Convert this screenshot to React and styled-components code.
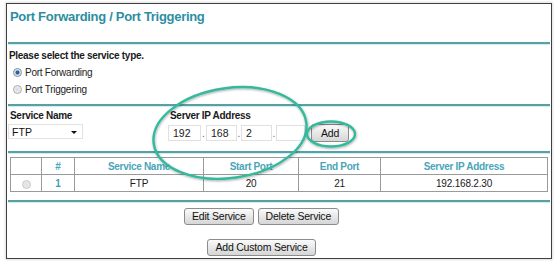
import React from 'react';
import styled, { createGlobalStyle } from 'styled-components';

const Global = createGlobalStyle`
  html, body { margin: 0; padding: 0; background: #fff; }
  body { font-family: "Liberation Sans", Arial, sans-serif; font-size: 10px; color: #1a1a1a; }
  * { box-sizing: border-box; }
`;

const Page = styled.div`
  position: relative;
  width: 557px;
  height: 266px;
  padding: 3px 6px 0 6px;
`;

const Frame = styled.div`
  width: 546px;
  height: 256px;
  border: 1px solid #3f3f3f;
  box-shadow: 0 0 2px 1px rgba(0, 0, 0, 0.13);
  display: flex;
  flex-direction: column;
  background: #fff;
`;

const TitleBar = styled.div`
  height: 38px;
  padding: 5px 0 0 3px;
  flex-shrink: 0;
`;

const Title = styled.h1`
  margin: 0;
  font-size: 13px;
  line-height: 16px;
  font-weight: bold;
  color: #2d8ea3;
  letter-spacing: -0.3px;
`;

const Divider = styled.div`
  height: 2px;
  margin: 0 1px;
  flex-shrink: 0;
  background: #5a9ea6;
  box-shadow: 0 1px 1px #c9eef0;
`;

const TypeSection = styled.div`
  height: 60px;
  padding: 6px 0 0 2px;
  display: flex;
  flex-direction: column;
  flex-shrink: 0;
`;

const BoldLabel = styled.div`
  font-weight: bold;
  line-height: 12px;
  letter-spacing: -0.3px;
  color: #1a1a1a;
  padding-left: ${(p) => p.$indent || 0}px;
`;

const RadioRow = styled.label`
  display: flex;
  align-items: center;
  height: 17px;
  padding-left: 4px;
  gap: 3px;
  letter-spacing: -0.25px;
  color: #222;
  &:first-of-type { margin-top: 2px; }
`;

const RadioDot = styled.span`
  display: inline-block;
  width: 9px;
  height: 9px;
  border-radius: 50%;
  flex-shrink: 0;
  border: 1px solid ${(p) => (p.$disabled ? '#c9c9c9' : p.$checked ? '#7b8ea3' : '#a3abb3')};
  background: ${(p) =>
    p.$disabled
      ? 'radial-gradient(circle, #e2e2e2 0, #ececec 100%)'
      : p.$checked
      ? 'radial-gradient(circle, #2b5f9f 0, #2b5f9f 1.6px, #d4dde7 2.4px, #f6f6f6 100%)'
      : 'radial-gradient(circle, #d5dae0 0, #f7f7f7 100%)'};
`;

const ServiceSection = styled.div`
  height: 45px;
  padding: 4px 0 0 1px;
  display: flex;
  flex-shrink: 0;
`;

const FieldCol = styled.div`
  display: flex;
  flex-direction: column;
  gap: 2px;
  width: ${(p) => (p.$width ? `${p.$width}px` : 'auto')};
`;

const SelectBox = styled.div`
  position: relative;
  width: 75px;
  height: 15px;
  border: 1px solid #e2e2e2;
  display: flex;
  align-items: center;
  padding-left: 3px;
  font-size: 10.5px;
  letter-spacing: 0.1px;
  color: #111;
`;

const SelectArrow = styled.span`
  position: absolute;
  right: 5px;
  top: 6px;
  width: 0;
  height: 0;
  border-left: 3px solid transparent;
  border-right: 3px solid transparent;
  border-top: 3px solid #111;
`;

const IpRow = styled.div`
  display: flex;
  align-items: center;
  height: 18px;
`;

const IpBox = styled.div`
  width: ${(p) => p.$w}px;
  height: 16px;
  border: 1px solid #e0e0e0;
  padding-left: 4px;
  display: flex;
  align-items: center;
  font-size: 10.5px;
  color: #222;
`;

const IpDot = styled.span`
  width: ${(p) => p.$w || 4}px;
  text-align: center;
  color: #666;
  line-height: 16px;
  padding-top: 2px;
`;

const Button = styled.button`
  height: ${(p) => p.$h || 17}px;
  padding: 0 ${(p) => p.$px || 7}px;
  margin-left: ${(p) => p.$ml || 0}px;
  border: 1px solid #8c8c8c;
  border-radius: 3px;
  background: linear-gradient(#fbfbfb, #e6e6e6 55%, #d6d6d6);
  font-family: "Liberation Sans", Arial, sans-serif;
  font-size: 10.5px;
  letter-spacing: -0.2px;
  color: #111;
  line-height: 1;
  cursor: pointer;
`;

const TableSection = styled.div`
  height: 47px;
  padding: 4px 3px 0 3px;
  flex-shrink: 0;
`;

const Table = styled.table`
  width: 537px;
  table-layout: fixed;
  border-collapse: collapse;
  border: 1px solid #7a7a7a;
`;

const Th = styled.th`
  height: 17px;
  padding: 0;
  border: 1px solid #9a9a9a;
  font-weight: bold;
  color: #4aa5b8;
  letter-spacing: -0.3px;
  text-align: center;
`;

const Td = styled.td`
  height: 17px;
  padding: 0;
  border: 1px solid #9a9a9a;
  text-align: center;
  letter-spacing: -0.2px;
  color: ${(p) => (p.$accent ? '#3f9db2' : '#1a1a1a')};
  font-weight: ${(p) => (p.$accent ? 'bold' : 'normal')};
`;

const RadioCell = styled.div`
  display: flex;
  justify-content: center;
  padding-top: 2px;
`;

const ButtonsSection = styled.div`
  flex: 1;
  display: flex;
  flex-direction: column;
  align-items: center;
  padding: 6px 35px 0 0;
  gap: 14px;
`;

const ButtonRow = styled.div`
  display: flex;
  gap: 4px;
`;

const Overlay = styled.svg`
  position: absolute;
  left: 0;
  top: 0;
  pointer-events: none;
  overflow: visible;
`;

const columns = [31, 33, 129, 95, 82, 167];
const headers = ['', '#', 'Service Name', 'Start Port', 'End Port', 'Server IP Address'];

export default function App() {
  return (
    <>
      <Global />
      <Page>
        <Frame>
          <TitleBar>
            <Title>Port Forwarding / Port Triggering</Title>
          </TitleBar>
          <Divider />
          <TypeSection>
            <BoldLabel>Please select the service type.</BoldLabel>
            <RadioRow>
              <RadioDot $checked />
              Port Forwarding
            </RadioRow>
            <RadioRow>
              <RadioDot />
              Port Triggering
            </RadioRow>
          </TypeSection>
          <Divider />
          <ServiceSection>
            <FieldCol $width={160}>
              <BoldLabel $indent={2}>Service Name</BoldLabel>
              <SelectBox>
                FTP
                <SelectArrow />
              </SelectBox>
            </FieldCol>
            <FieldCol>
              <BoldLabel $indent={2}>Server IP Address</BoldLabel>
              <IpRow>
                <IpBox $w={33}>192</IpBox>
                <IpDot $w={5}>.</IpDot>
                <IpBox $w={31}>168</IpBox>
                <IpDot>.</IpDot>
                <IpBox $w={31}>2</IpBox>
                <IpDot>.</IpDot>
                <IpBox $w={29} />
                <Button $ml={6} $h={18} $px={9}>Add</Button>
              </IpRow>
            </FieldCol>
          </ServiceSection>
          <Divider />
          <TableSection>
            <Table>
              <colgroup>
                {columns.map((w, i) => (
                  <col key={i} style={{ width: w }} />
                ))}
              </colgroup>
              <thead>
                <tr>
                  {headers.map((h, i) => (
                    <Th key={i}>{h}</Th>
                  ))}
                </tr>
              </thead>
              <tbody>
                <tr>
                  <Td>
                    <RadioCell>
                      <RadioDot $disabled />
                    </RadioCell>
                  </Td>
                  <Td $accent>1</Td>
                  <Td>FTP</Td>
                  <Td>20</Td>
                  <Td>21</Td>
                  <Td>192.168.2.30</Td>
                </tr>
              </tbody>
            </Table>
          </TableSection>
          <Divider />
          <ButtonsSection>
            <ButtonRow>
              <Button>Edit Service</Button>
              <Button>Delete Service</Button>
            </ButtonRow>
            <ButtonRow>
              <Button>Add Custom Service</Button>
            </ButtonRow>
          </ButtonsSection>
        </Frame>
        <Overlay width="557" height="266" viewBox="0 0 557 266">
          <defs>
            <filter id="sh" x="-20%" y="-20%" width="140%" height="140%">
              <feDropShadow dx="0.5" dy="1" stdDeviation="0.8" floodColor="#000" floodOpacity="0.35" />
            </filter>
          </defs>
          <g filter="url(#sh)" fill="none" stroke="#34b99c" strokeWidth="2.4">
            <ellipse cx="230" cy="133" rx="77" ry="45" transform="rotate(-8 230 133)" />
            <ellipse cx="331" cy="134" rx="24" ry="12.5" />
          </g>
        </Overlay>
      </Page>
    </>
  );
}
